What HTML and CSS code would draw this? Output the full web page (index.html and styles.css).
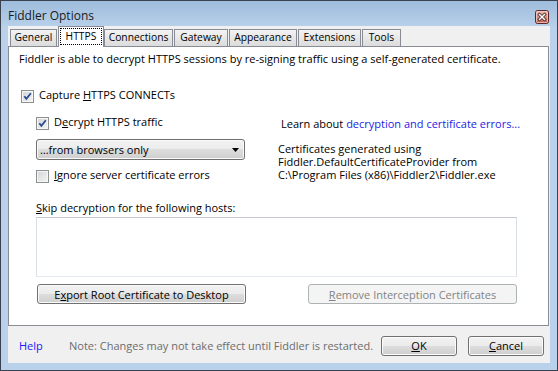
FILE: index.html
```html
<!DOCTYPE html>
<html>
<head>
<meta charset="utf-8">
<link rel="stylesheet" href="styles.css">
</head>
<body>
<div class="window">
  <div class="titlebar">
    <span class="title">Fiddler Options</span>
    <span class="close">
      <svg width="14" height="14" viewBox="0 0 14 14">
        <defs>
          <linearGradient id="cg" x1="0" y1="0" x2="0" y2="1">
            <stop offset="0" stop-color="#efc0b8"/>
            <stop offset="0.5" stop-color="#d98a7e"/>
            <stop offset="1" stop-color="#c2594c"/>
          </linearGradient>
        </defs>
        <rect x="0.5" y="0.5" width="13" height="13" rx="2" fill="url(#cg)" stroke="#5a2626"/>
        <rect x="1.5" y="1.5" width="11" height="11" rx="1" fill="none" stroke="#f3d2cc" stroke-opacity="0.7"/>
        <path d="M4.5 4.5 L9.5 9.5 M9.5 4.5 L4.5 9.5" stroke="#3b2020" stroke-width="3" stroke-linecap="square"/>
        <path d="M4.5 4.5 L9.5 9.5 M9.5 4.5 L4.5 9.5" stroke="#ffffff" stroke-width="1.5" stroke-linecap="square"/>
      </svg>
    </span>
  </div>
  <div class="client">
    <div class="tabs">
      <div class="tab tab-general">General</div>
      <div class="tab tab-https selected"><span class="focus">HTTPS</span></div>
      <div class="tab tab-connections">Connections</div>
      <div class="tab tab-gateway">Gateway</div>
      <div class="tab tab-appearance">Appearance</div>
      <div class="tab tab-extensions">Extensions</div>
      <div class="tab tab-tools">Tools</div>
    </div>
    <div class="panel">
      <div class="intro">Fiddler is able to decrypt HTTPS sessions by re-signing traffic using a self-generated certificate.</div>
      <div class="check capture">
        <span class="box"><svg width="9" height="9" viewBox="0 0 9 9"><path d="M1.3 4.2 L3.4 6.8 L7.8 1.3" fill="none" stroke="#2b4a8c" stroke-width="1.8"/></svg></span>
        <span>Capture <u>H</u>TTPS CONNECTs</span>
      </div>
      <div class="split">
        <div class="left">
          <div class="check">
            <span class="box"><svg width="9" height="9" viewBox="0 0 9 9"><path d="M1.3 4.2 L3.4 6.8 L7.8 1.3" fill="none" stroke="#2b4a8c" stroke-width="1.8"/></svg></span>
            <span>D<u>e</u>crypt HTTPS traffic</span>
          </div>
          <div class="select">
            <span>…from browsers only</span>
            <svg class="arrow" width="7" height="4" viewBox="0 0 7 4"><path d="M0 0 H7 L3.5 4 Z" fill="#000"/></svg>
          </div>
          <div class="check ignore">
            <span class="box"></span>
            <span><u>I</u>gnore server certificate errors</span>
          </div>
        </div>
        <div class="right">
          <div class="learn">Learn about <span class="link">decryption and certificate errors...</span></div>
          <div class="certinfo">
            <div class="certline">Certificates generated using</div>
            <div class="certline">Fiddler.DefaultCertificateProvider from</div>
            <div class="certline">C:\Program Files (x86)\Fiddler2\Fiddler.exe</div>
          </div>
        </div>
      </div>
      <div class="skip"><u>S</u>kip decryption for the following hosts:</div>
      <div class="hosts"></div>
      <div class="actions">
        <button class="btn export">E<u>x</u>port Root Certificate to Desktop</button>
        <button class="btn remove" disabled><u>R</u>emove Interception Certificates</button>
      </div>
    </div>
    <div class="footer">
      <span class="help">Help</span>
      <span class="note">Note: Changes may not take effect until Fiddler is restarted.</span>
      <button class="btn ok"><u>O</u>K</button>
      <button class="btn cancel"><u>C</u>ancel</button>
    </div>
  </div>
</div>
</body>
</html>
```
FILE: styles.css
```css
html, body {
  margin: 0;
  padding: 0;
  background: #ffffff;
}

body {
  font-family: "Open Sans", "Noto Sans", sans-serif;
  font-size: 11px;
  line-height: 13px;
  color: #000;
}

.window {
  width: 558px;
  height: 371px;
  box-sizing: border-box;
  border: 1px solid #3a4250;
  padding: 0 7px 7px 7px;
  background: linear-gradient(#9fbcdc 0px, #b4cde8 22px, #b9d1ea 26px);
  display: flex;
  flex-direction: column;
}

.titlebar {
  height: 25px;
  flex: none;
  display: flex;
  align-items: flex-start;
  justify-content: space-between;
}

.title {
  margin-top: 7px;
  font-size: 12px;
  line-height: 15px;
  color: #1a1a1a;
}

.close {
  margin-top: 9px;
  margin-right: 1px;
  width: 14px;
  height: 14px;
  display: block;
}

.close svg {
  display: block;
}

.client {
  height: 337px;
  flex: none;
  background: #f0f0f0;
  display: flex;
  flex-direction: column;
}

.tabs {
  height: 20px;
  flex: none;
  display: flex;
  align-items: flex-end;
  padding-left: 2px;
  position: relative;
  z-index: 1;
}

.tab {
  box-sizing: border-box;
  height: 17px;
  border: 1px solid #898c95;
  border-bottom: none;
  background: linear-gradient(#f3f3f3, #e8e8e8 45%, #dcdcdc);
  font-size: 10.3px;
  line-height: 15px;
  text-align: center;
  margin-right: 1px;
  white-space: nowrap;
  color: #000;
}

.tab.selected {
  height: 21px;
  margin-bottom: -1px;
  background: #ffffff;
  padding: 1px 1px 2px 1px;
  margin-right: 0;
}

.focus {
  display: block;
  box-sizing: border-box;
  height: 17px;
  border: 1px dotted #000;
  line-height: 14px;
}

.tab-general { width: 47px; }
.tab-https { width: 46px; }
.tab-connections { width: 69px; }
.tab-gateway { width: 54px; }
.tab-appearance { width: 68px; }
.tab-extensions { width: 63px; }
.tab-tools { width: 39px; }

.panel {
  box-sizing: border-box;
  height: 280px;
  flex: none;
  margin-right: 1px;
  border: 1px solid #898c95;
  background: #ffffff;
  padding-top: 5px;
}

.intro {
  padding-left: 10px;
  white-space: nowrap;
}

.check {
  display: flex;
  align-items: flex-start;
  height: 13px;
  white-space: nowrap;
}

.box {
  box-sizing: border-box;
  width: 13px;
  height: 13px;
  margin-top: 2px;
  margin-right: 5px;
  flex: none;
  border: 1px solid #8e8f8f;
  background: linear-gradient(135deg, #d2d4d8, #f4f4f4);
  box-shadow: inset 0 0 0 1px #f6f6f6;
  display: flex;
  align-items: center;
  justify-content: center;
}

.box svg {
  display: block;
}

.capture {
  margin-top: 23px;
  margin-left: 12px;
}

.split {
  display: flex;
  margin-top: 14px;
}

.left {
  margin-left: 27px;
  width: 209px;
  flex: none;
}

.select {
  box-sizing: border-box;
  margin-top: 11px;
  height: 21px;
  border: 1px solid #707070;
  border-radius: 3px;
  background: linear-gradient(#f2f2f2 0%, #ebebeb 50%, #dddddd 50%, #cfcfcf 100%);
  box-shadow: inset 0 0 0 1px #fafafa;
  display: flex;
  align-items: center;
  justify-content: space-between;
  padding: 0 5px 0 3px;
}

.arrow {
  display: block;
  margin-top: 1px;
}

.ignore {
  margin-top: 8px;
}

.right {
  margin-left: 33px;
  white-space: nowrap;
}

.learn {
  margin-top: 2px;
  padding-left: 3px;
}

.link {
  color: #2323e6;
}

.certinfo {
  margin-top: 12px;
}

.certline {
  height: 13px;
}

.skip {
  margin-top: 20px;
  margin-left: 27px;
}

.hosts {
  box-sizing: border-box;
  margin-top: 3px;
  margin-left: 27px;
  width: 481px;
  height: 60px;
  border: 1px solid #dbdfe6;
  border-top-color: #c5c8cf;
  border-bottom-color: #e3e9ef;
  background: #ffffff;
}

.actions {
  display: flex;
  margin-top: 7px;
}

.btn {
  box-sizing: border-box;
  height: 20px;
  border: 1px solid #707070;
  border-radius: 3px;
  background: linear-gradient(#f2f2f2 0%, #ebebeb 50%, #dddddd 50%, #cfcfcf 100%);
  box-shadow: inset 0 0 0 1px #fbfbfb;
  font-family: "Open Sans", "Noto Sans", sans-serif;
  font-size: 11px;
  line-height: 13px;
  color: #000;
  padding: 0;
  margin: 0;
  text-align: center;
  white-space: nowrap;
}

.export {
  width: 209px;
  margin-left: 28px;
}

.remove {
  width: 209px;
  margin-left: 62px;
  border-color: #adb2b5;
  background: #f4f4f4;
  box-shadow: none;
  color: #838383;
}

.footer {
  box-sizing: border-box;
  height: 37px;
  flex: none;
  display: flex;
  align-items: center;
  padding: 2px 6px 0 11px;
  white-space: nowrap;
}

.help {
  width: 50px;
  flex: none;
  color: #1a1aff;
}

.note {
  color: #6d6d6d;
}

.ok {
  width: 76px;
  margin-left: auto;
}

.cancel {
  width: 76px;
  margin-left: 11px;
}
```
